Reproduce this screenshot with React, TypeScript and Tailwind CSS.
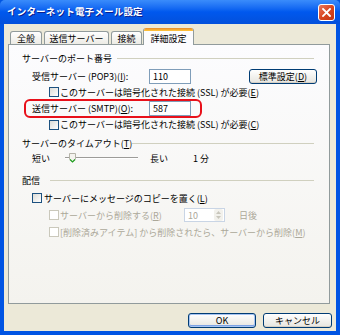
import React from "react";

const FONT = "font-['Noto_Sans_CJK_JP','Noto_Sans_CJK_SC',sans-serif]";

function Cb({ disabled }: { disabled?: boolean }) {
  return (
    <span
      className={`block w-[10px] h-[10px] shrink-0 border ${
        disabled ? "border-[#CAC8BB] bg-white" : "border-[#1C5180] bg-linear-to-br from-[#DCDCD7] to-white"
      }`}
    />
  );
}

function Header({ label, w }: { label: React.ReactNode; w: string }) {
  return (
    <div className="flex items-center h-[16px] pl-[13px] pr-[15px]">
      <span className={`${w} shrink-0 whitespace-nowrap`}>{label}</span>
      <div className="flex-1 h-px bg-[#D0D0BF]" />
    </div>
  );
}

function Tab({ label, w, active }: { label: string; w: string; active?: boolean }) {
  if (active) {
    return (
      <div
        className={`${w} h-[17px] -mb-px relative z-10 flex flex-col bg-[#FCFCFE] border-x border-[#919B9C] rounded-t-[3px] overflow-hidden`}
      >
        <div className="h-[3px] bg-linear-to-b from-[#E68B2C] to-[#FFC73C] shrink-0" />
        <div className="flex-1 flex items-center justify-center text-[9px] leading-none">{label}</div>
      </div>
    );
  }
  return (
    <div
      className={`${w} h-[13px] flex items-center justify-center text-[9px] leading-none border border-b-0 border-[#919B9C] rounded-t-[3px] bg-linear-to-b from-white to-[#ECEBE5]`}
    >
      {label}
    </div>
  );
}

function Btn({ children, def, w }: { children: React.ReactNode; def?: boolean; w: string }) {
  return (
    <div
      className={`${w} h-[15px] rounded-[3px] border border-[#003C74] flex items-center justify-center text-[9px] leading-none bg-linear-to-b from-white to-[#E6E5DF] ${
        def ? "shadow-[inset_0_0_0_1px_#A6C4F2,inset_0_-1px_0_1px_#7CA2E4]" : "shadow-[inset_0_-1px_0_#D6D0C5]"
      }`}
    >
      {children}
    </div>
  );
}

export default function App() {
  return (
    <div className={`w-[340px] h-[335px] flex flex-col bg-[#0054E3] text-black ${FONT}`}>
      {/* Title bar */}
      <div className="h-[24px] shrink-0 flex items-center pl-[7px] pr-[5px] bg-linear-to-b from-[#3A8CFB] via-[#0058EE] to-[#0350DB] rounded-t-[5px]">
        <span className="text-white font-bold text-[9.5px] leading-none tracking-[0.2px] [text-shadow:1px_1px_0_#0A1E8C]">
          インターネット電子メール設定
        </span>
        <div className="ml-auto w-[17px] h-[17px] rounded-[3px] border border-white bg-linear-to-br from-[#E8765A] via-[#D9461F] to-[#C13412] flex items-center justify-center">
          <svg width="9" height="9" viewBox="0 0 9 9">
            <path d="M1 1 L8 8 M8 1 L1 8" stroke="white" strokeWidth="1.8" strokeLinecap="square" />
          </svg>
        </div>
      </div>

      {/* Frame */}
      <div className="flex-1 flex px-[4px] pb-[4px]">
        <div className="flex-1 bg-[#ECE9D8] flex flex-col">
          {/* Tabs */}
          <div className="flex items-end pt-[4px] pl-[6px] gap-[2px] h-[20px] shrink-0">
            <Tab label="全般" w="w-[32px]" />
            <Tab label="送信サーバー" w="w-[65px]" />
            <Tab label="接続" w="w-[31px]" />
            <div className="-ml-[1px]">
              <Tab label="詳細設定" w="w-[51px]" active />
            </div>
          </div>

          {/* Panel */}
          <div className="ml-[4px] w-[322px] h-[260px] shrink-0 border border-[#919B9C] bg-linear-to-b from-[#FCFCFE] to-[#F4F3EE] text-[9px] leading-none pt-[5px]">
            <Header label="サーバーのポート番号" w="w-[95px]" />

            {/* POP3 row */}
            <div className="mt-[2px] h-[16px] flex items-center pl-[23px]">
              <span className="w-[117px] whitespace-nowrap">
                受信サーバー (POP3)(<u>I</u>):
              </span>
              <div className="w-[42px] h-[15px] border border-[#7F9DB9] bg-white flex items-center pl-[3px]">110</div>
              <div className="ml-[58px]">
                <Btn w="w-[68px]">
                  標準設定(<u>D</u>)
                </Btn>
              </div>
            </div>

            {/* SSL 1 */}
            <div className="mt-[1px] h-[14px] flex items-center pl-[40px] gap-[1px]">
              <Cb />
              <span className="whitespace-nowrap">
                このサーバーは暗号化された接続 (SSL) が必要(<u>E</u>)
              </span>
            </div>

            {/* SMTP row */}
            <div className="ml-[15px] w-[178px] h-[19px] border-2 border-[#E8101A] rounded-[6px] flex items-center pl-[6px]">
              <span className="w-[117px] whitespace-nowrap">
                送信サーバー (SMTP)(<u>O</u>):
              </span>
              <div className="w-[42px] h-[15px] border border-[#7F9DB9] bg-white flex items-center pl-[3px]">587</div>
            </div>

            {/* SSL 2 */}
            <div className="h-[13px] flex items-center pl-[40px] gap-[1px]">
              <Cb />
              <span className="whitespace-nowrap">
                このサーバーは暗号化された接続 (SSL) が必要(<u>C</u>)
              </span>
            </div>

            <div className="mt-[4px]">
              <Header
                label={
                  <>
                    サーバーのタイムアウト(<u>T</u>)
                  </>
                }
                w="w-[110px]"
              />
            </div>

            {/* Slider row */}
            <div className="h-[14px] flex items-center pl-[23px]">
              <span className="w-[33px]">短い</span>
              <div className="w-[73px] h-[10px] relative flex items-center">
                <div className="w-full h-[2px] border-t border-[#9D9C99] border-b border-b-white bg-[#E7E6E0]" />
                <svg className="absolute left-[4px] top-0" width="7" height="10" viewBox="0 0 7 10">
                  <path d="M0.5 0.5 H6.5 V6 L3.5 9 L0.5 6 Z" fill="#F4F3EE" stroke="#B5B3A8" strokeWidth="1" />
                  <path d="M1 6.5 L3.5 9 L6 6.5" fill="none" stroke="#21A121" strokeWidth="1.2" />
                </svg>
              </div>
              <span className="ml-[12px] w-[43px]">長い</span>
              <span>1 分</span>
            </div>

            <div className="mt-[7px]">
              <Header label="配信" w="w-[28px]" />
            </div>

            {/* copy */}
            <div className="mt-[3px] h-[14px] flex items-center pl-[23px] gap-[2px]">
              <Cb />
              <span className="whitespace-nowrap">
                サーバーにメッセージのコピーを置く(<u>L</u>)
              </span>
            </div>

            {/* delete */}
            <div className="mt-[3px] h-[14px] flex items-center pl-[40px] gap-[1px] text-[#ACA899]">
              <Cb disabled />
              <span className="w-[123px] whitespace-nowrap">
                サーバーから削除する(<u>R</u>)
              </span>
              <div className="w-[41px] h-[14px] border border-[#C9D5E5] bg-white flex items-center pl-[3px]">
                <span className="flex-1">10</span>
                <div className="w-[9px] h-[12px] mr-[1px] rounded-[2px] bg-[#F2F1EC] flex flex-col items-center justify-center gap-[2px]">
                  <svg width="5" height="3" viewBox="0 0 5 3">
                    <path d="M0 3 L2.5 0 L5 3 Z" fill="#C8C6BC" />
                  </svg>
                  <svg width="5" height="3" viewBox="0 0 5 3">
                    <path d="M0 0 L2.5 3 L5 0 Z" fill="#C8C6BC" />
                  </svg>
                </div>
              </div>
              <span className="ml-[13px]">日後</span>
            </div>

            {/* deleted items */}
            <div className="mt-[3px] h-[14px] flex items-center pl-[40px] gap-[1px] text-[#ACA899]">
              <Cb disabled />
              <span className="whitespace-nowrap">
                [削除済みアイテム] から削除されたら、サーバーから削除(<u>M</u>)
              </span>
            </div>
          </div>

          {/* Buttons */}
          <div className="mt-[9px] flex justify-end gap-[7px] pr-[4px]">
            <Btn def w="w-[68px]">
              OK
            </Btn>
            <Btn w="w-[69px]">キャンセル</Btn>
          </div>
        </div>
      </div>
    </div>
  );
}
